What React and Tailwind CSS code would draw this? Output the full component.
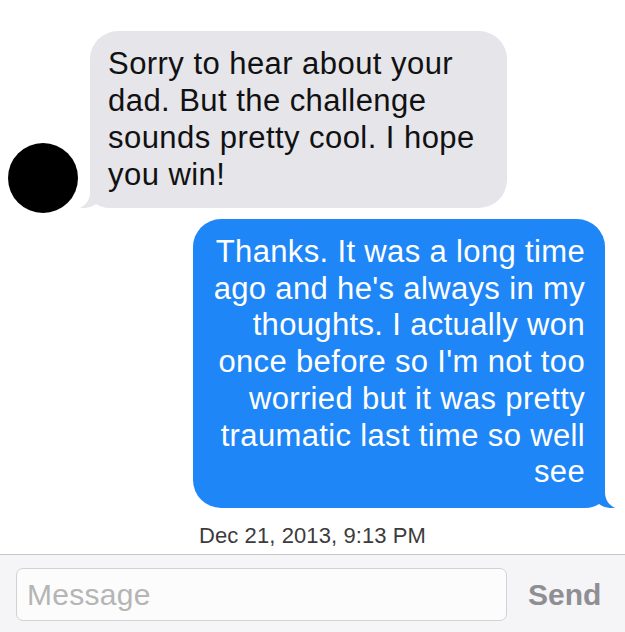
import React from "react";

function Tail({ color, flip }) {
  return (
    <svg
      className={
        "absolute bottom-0 w-[40px] h-[34px] " +
        (flip ? "right-[-10px] -scale-x-100" : "left-[-10px]")
      }
      viewBox="0 0 40 34"
    >
      <path
        d="M10,0 L10,18 C10,26 6,31 0,34 C6,34.6 12,33 16,30 C19,32 24,34 30,34 L40,34 L40,0 Z"
        fill={color}
      />
    </svg>
  );
}

export default function App() {
  return (
    <div
      className="w-[625px] h-[632px] bg-white flex flex-col overflow-hidden"
      style={{ fontFamily: '"Liberation Sans", Arial, sans-serif' }}
    >
      <div className="flex-1 flex flex-col pt-[31px]">
        <div className="flex items-end">
          <div className="ml-[8px] w-[70px] h-[70px] rounded-full bg-black" />
          <div className="relative ml-[12px] mb-[5px] w-[417px] rounded-[28px] bg-[#e5e5ea] pl-[18px] pt-[14px] pb-[15px] text-[31px] leading-[37px] tracking-[0.45px] text-[#111111]">
            <Tail color="#e5e5ea" />
            <div className="relative whitespace-nowrap">
              Sorry to hear about your
              <br />
              dad. But the challenge
              <br />
              sounds pretty cool. I hope
              <br />
              you win!
            </div>
          </div>
        </div>

        <div className="relative self-end mt-[6px] mr-[20px] w-[412px] rounded-[28px] bg-[#1f86f7] pr-[20px] pt-[15px] pb-[17px] text-right text-[31px] leading-[36.7px] tracking-[0.35px] text-white">
          <Tail color="#1f86f7" flip />
          <div className="relative whitespace-nowrap">
            Thanks. It was a long time
            <br />
            ago and he's always in my
            <br />
            thoughts. I actually won
            <br />
            once before so I'm not too
            <br />
            worried but it was pretty
            <br />
            traumatic last time so well
            <br />
            see
          </div>
        </div>

        <div className="mt-[15px] text-center text-[22px] leading-[26px] tracking-[0.1px] text-[#3c3c3c]">
          Dec 21, 2013, 9:13 PM
        </div>
      </div>

      <div className="h-[78px] border-t border-[#c6c6c6] bg-[#f5f5f7] pt-[13px] pl-[16px]">
        <div className="flex items-center h-[53px]">
          <div className="w-[491px] h-[53px] rounded-[7px] border border-[#d2d2d2] bg-[#fcfcfc] flex items-center pl-[10px] text-[30px] tracking-[0.3px] text-[#b5b5b5]">
            Message
          </div>
          <div className="ml-[21px] text-[30px] font-bold text-[#8e8e93]">Send</div>
        </div>
      </div>
    </div>
  );
}
